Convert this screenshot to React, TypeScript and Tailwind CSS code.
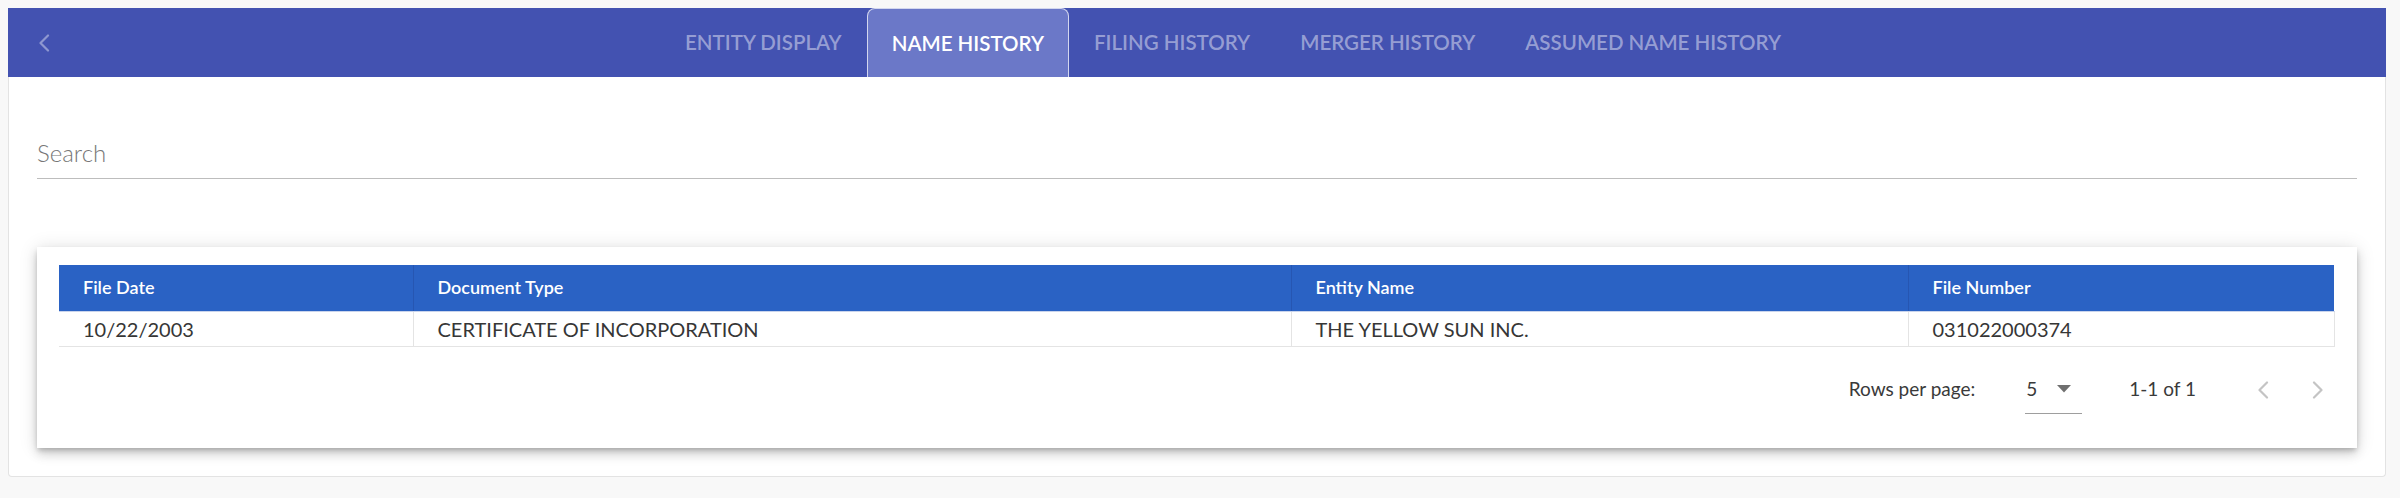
import React from "react";

const tabs = [
  "Entity Display",
  "Name History",
  "Filing History",
  "Merger History",
  "Assumed Name History",
];

const columns = [
  { label: "File Date", width: 354 },
  { label: "Document Type", width: 878 },
  { label: "Entity Name", width: 617 },
  { label: "File Number", width: 426 },
];

const rows = [
  ["10/22/2003", "CERTIFICATE OF INCORPORATION", "THE YELLOW SUN INC.", "031022000374"],
];

function Chevron({ dir, className }: { dir: "left" | "right"; className?: string }) {
  return (
    <svg width="12" height="18" viewBox="0 0 12 18" className={className} fill="none">
      <polyline
        points={dir === "left" ? "10,1.5 2.5,9 10,16.5" : "2,1.5 9.5,9 2,16.5"}
        stroke="currentColor"
        strokeWidth="2.2"
        strokeLinecap="round"
        strokeLinejoin="round"
      />
    </svg>
  );
}

export default function App() {
  const active = 1;
  return (
    <div className="w-[2400px] h-[498px] bg-[#f8f8f8] pt-2 pl-2 font-['Lato','Noto_Sans',sans-serif]">
      <div className="w-[2378px]">
        {/* tab bar */}
        <div className="h-[69px] bg-[#4352b1] flex">
          <button className="w-[72px] h-full flex items-center justify-center text-white/40">
            <Chevron dir="left" />
          </button>
          <div className="flex-1 flex justify-center">
            {tabs.map((t, i) => (
              <div
                key={t}
                className={
                  i === active
                    ? "h-full px-6 flex items-center uppercase text-[20.5px] font-semibold text-white bg-[#6b78c8] rounded-t-lg border border-b-0 border-white/70"
                    : "h-full px-6 flex items-center uppercase text-[20.5px] font-semibold text-white/45 border border-transparent"
                }
              >
                {t}
              </div>
            ))}
          </div>
        </div>

        {/* body panel */}
        <div className="h-[400px] bg-white border-x border-b border-[#e3e3e3] rounded-b px-7 pt-[58px]">
          <div className="pb-[7px] border-b border-[#bdbdbd]">
            <input
              placeholder="Search"
              className="w-full h-[36px] text-[24px] leading-[36px] font-light outline-none placeholder:text-[#777] text-[#333]"
            />
          </div>

          <div className="mt-[68px] h-[201px] bg-white px-[22px] pt-[18px] pb-4 shadow-[0_3px_5px_-1px_rgba(0,0,0,0.2),0_6px_10px_0_rgba(0,0,0,0.14),0_1px_18px_0_rgba(0,0,0,0.12)]">
            <table className="table-fixed border-collapse w-[2275px]">
              <colgroup>
                {columns.map((c) => (
                  <col key={c.label} style={{ width: c.width }} />
                ))}
              </colgroup>
              <thead>
                <tr className="h-[46px] bg-[#2a62c4]">
                  {columns.map((c, i) => (
                    <th
                      key={c.label}
                      className={
                        i === 0
                          ? "px-6 text-left text-[18px] font-semibold text-white border-b border-[#c9d4ec]"
                          : "px-6 text-left text-[18px] font-semibold text-white border-l border-[#2656b2] border-b border-b-[#c9d4ec]"
                      }
                    >
                      {c.label}
                    </th>
                  ))}
                </tr>
              </thead>
              <tbody>
                {rows.map((r) => (
                  <tr key={r[3]} className="h-[35px]">
                    {r.map((v, i) => (
                      <td
                        key={i}
                        className="px-6 text-[20px] text-[#363636] border-r border-b border-[#e4e4e4]"
                      >
                        {v}
                      </td>
                    ))}
                  </tr>
                ))}
              </tbody>
            </table>

            {/* pagination */}
            <div className="h-[86px] flex items-center justify-end text-[19px] text-[#3a3a3a]">
              <span>Rows per page:</span>
              <div className="ml-[50px] w-[57px] h-[48px] border-b border-[#9e9e9e] flex items-center">
                <span className="ml-px">5</span>
                <svg width="14" height="8" viewBox="0 0 14 8" className="ml-auto mr-[11px] text-[#6f6f6f]">
                  <polygon points="0,0 14,0 7,7.5" fill="currentColor" />
                </svg>
              </div>
              <span className="ml-[47px]">1-1 of 1</span>
              <button className="ml-[50px] w-[34px] h-[34px] flex items-center justify-center text-[#c4c4c4]">
                <Chevron dir="left" />
              </button>
              <button className="ml-[21px] w-[34px] h-[34px] flex items-center justify-center text-[#c4c4c4]">
                <Chevron dir="right" />
              </button>
            </div>
          </div>
        </div>
      </div>
    </div>
  );
}
